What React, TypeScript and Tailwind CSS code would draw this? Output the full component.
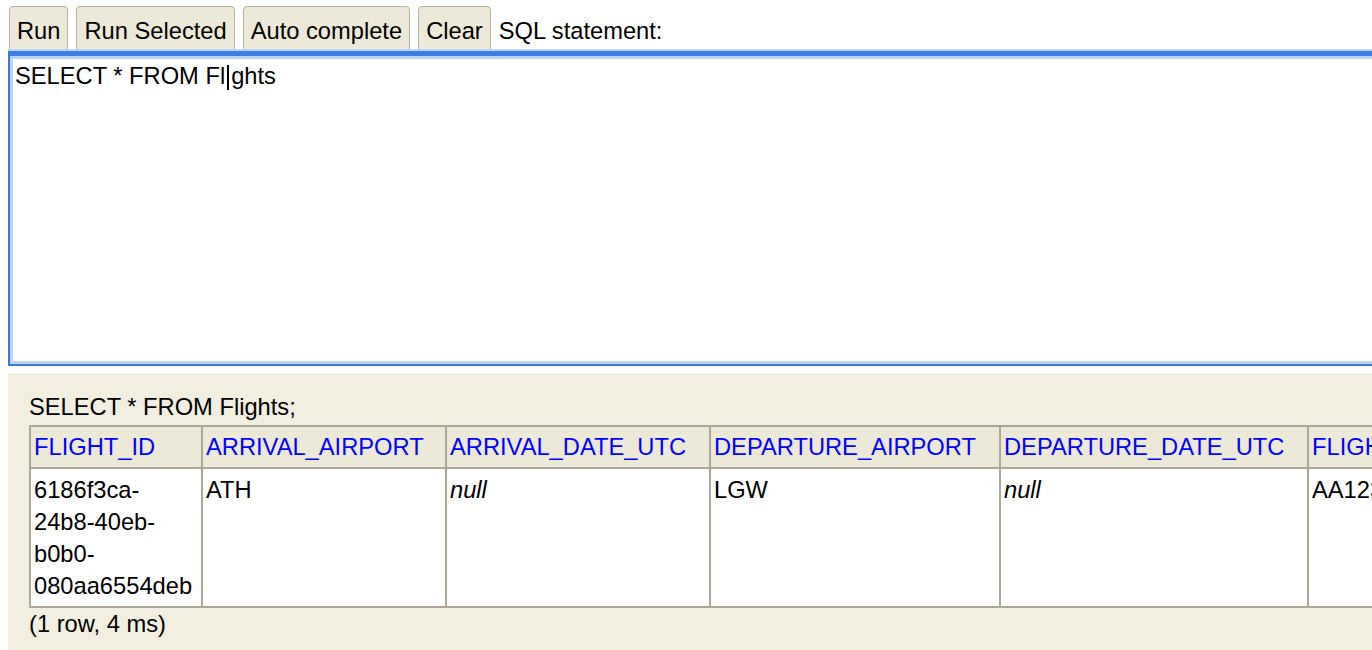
const buttons = ["Run", "Run Selected", "Auto complete", "Clear"];

const columns = [
  { name: "FLIGHT_ID", w: "w-[172px]" },
  { name: "ARRIVAL_AIRPORT", w: "w-[244px]" },
  { name: "ARRIVAL_DATE_UTC", w: "w-[264px]" },
  { name: "DEPARTURE_AIRPORT", w: "w-[290px]" },
  { name: "DEPARTURE_DATE_UTC", w: "w-[308px]" },
  { name: "FLIGHT_NUMBER", w: "w-[220px]" },
];

const row: (string | null | string[])[] = [
  ["6186f3ca-", "24b8-40eb-", "b0b0-", "080aa6554deb"],
  "ATH",
  null,
  "LGW",
  null,
  "AA123",
];

function Cell({ value, w }: { value: string | null | string[]; w: string }) {
  return (
    <div className={`${w} shrink-0 border-r-2 border-b-2 border-[#aca899] bg-white px-[3px] pt-[5px] pb-[4px] leading-[32px] whitespace-nowrap overflow-hidden`}>
      {value === null ? (
        <i>null</i>
      ) : Array.isArray(value) ? (
        value.map((l) => <div key={l}>{l}</div>)
      ) : (
        value
      )}
    </div>
  );
}

export default function App() {
  return (
    <div className="w-[1372px] h-[650px] overflow-hidden bg-white text-black text-[23.7px] font-['Liberation_Sans',Arial,sans-serif]">
      {/* toolbar */}
      <div className="flex items-start gap-[8px] pl-[9px] pt-[6px] h-[51px]">
        {buttons.map((b) => (
          <button
            key={b}
            className="h-[46px] shrink-0 rounded-[4px] border border-[#b5b2a4] bg-[#ece9d8] px-[7px] pt-[4px] leading-[27px] text-black"
          >
            {b}
          </button>
        ))}
        <span className="h-[46px] pt-[4px] flex items-center leading-[27px] whitespace-nowrap">SQL statement:</span>
      </div>

      {/* editor */}
      <div className="relative z-10 ml-[8px] w-[1500px] h-[315px] border-2 border-t-[5px] border-[#3c78d8] border-t-[#3f7de0] bg-white shadow-[inset_0_0_0_3px_#bcd3f6,0_-2px_0_0_#bcd3f6] pl-[5px] pt-[7px] leading-[27px]">
        <span>SELECT * FROM Fl</span>
        <span className="inline-block align-[-6px] w-[2px] h-[25px] bg-black mx-[2px]" />
        <span>ghts</span>
      </div>

      {/* result */}
      <div className="ml-[8px] mt-[7px] w-[1500px] h-[300px] bg-[#f2efe1] pl-[21px] pt-[18px]">
        <div className="leading-[32px]">SELECT * FROM Flights;</div>
        <div className="mt-[2px] flex flex-col border-l-2 border-t-2 border-[#aca899] w-max">
          <div className="flex">
            {columns.map((c) => (
              <div
                key={c.name}
                className={`${c.w} shrink-0 border-r-2 border-b-2 border-[#aca899] bg-[#ece9d8] px-[3px] py-[4px] leading-[32px] text-[#0000ff] whitespace-nowrap overflow-hidden`}
              >
                {c.name}
              </div>
            ))}
          </div>
          <div className="flex">
            {row.map((v, i) => (
              <Cell key={i} value={v} w={columns[i].w} />
            ))}
          </div>
        </div>
        <div className="leading-[32px]">(1 row, 4 ms)</div>
      </div>
    </div>
  );
}
